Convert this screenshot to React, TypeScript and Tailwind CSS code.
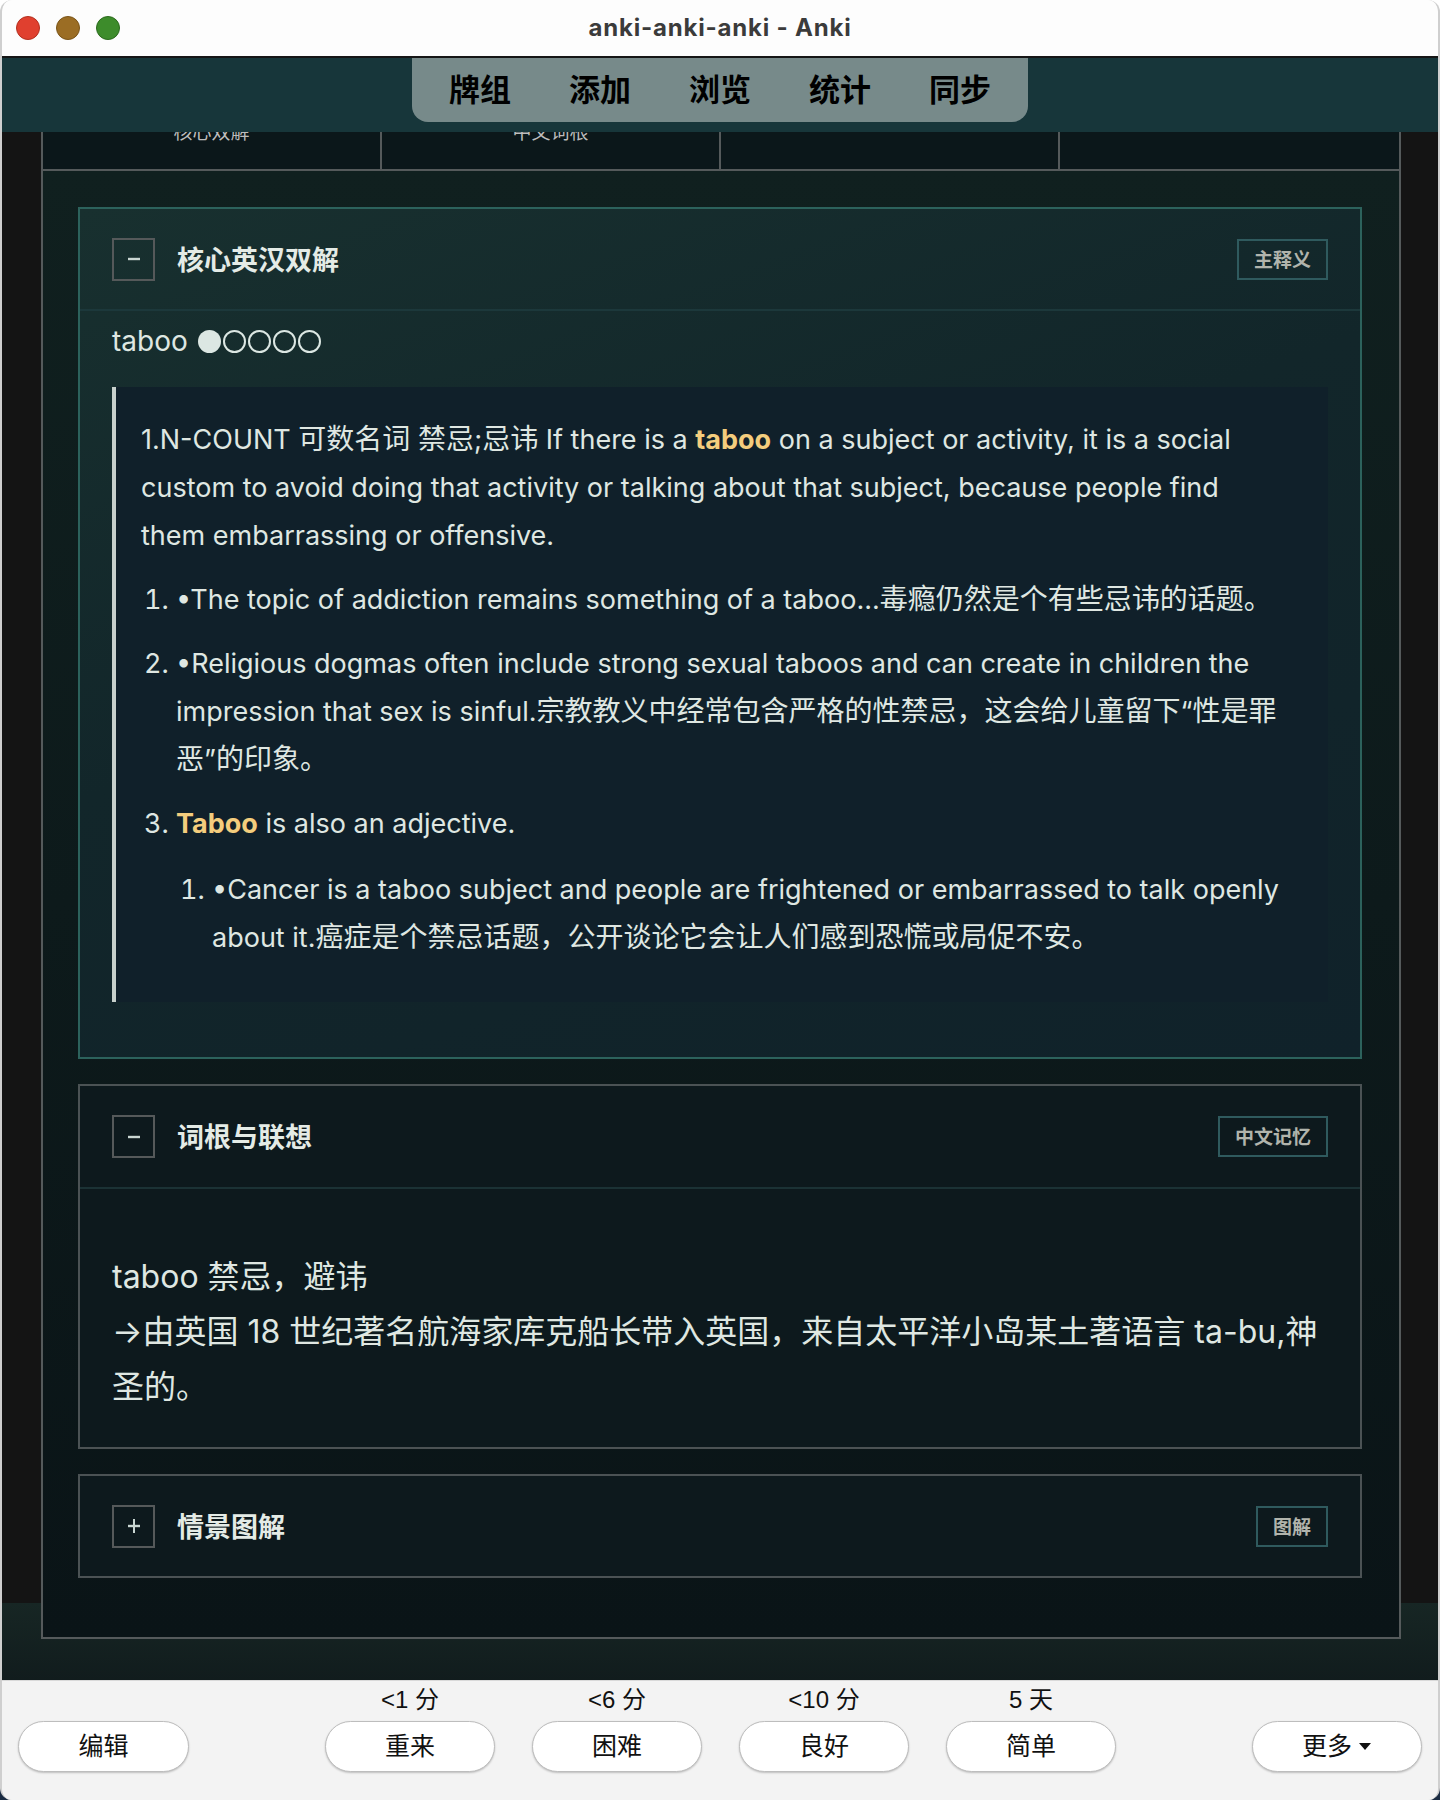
import React from "react";

type Tone = "teal" | "plain";

interface SectionProps {
  title: string;
  badge: string;
  open: boolean;
  tone: Tone;
  children?: React.ReactNode;
}

// Chinese runs are set a touch larger than the latin text around them
function Mixed({ text }: { text: string }) {
  const parts = text.split(/([\u3000-\u303f\u3400-\u9fff\uff00-\uffef]+)/);
  return (
    <>
      {parts.map((p, i) =>
        i % 2 ? (
          <span key={i} className="text-[28px] leading-none">
            {p}
          </span>
        ) : (
          p
        )
      )}
    </>
  );
}

function ToggleBox({ open }: { open: boolean }) {
  return (
    <div className="w-[43px] h-[43px] border-2 border-[#55595a] flex items-center justify-center shrink-0">
      <svg width="18" height="18" viewBox="0 0 18 18">
        <line x1="3" y1="9" x2="15" y2="9" stroke="#c9d6d2" strokeWidth="2.4" />
        {!open && <line x1="9" y1="2" x2="9" y2="16" stroke="#c9d6d2" strokeWidth="2" />}
      </svg>
    </div>
  );
}

function Section({ title, badge, open, tone, children }: SectionProps) {
  const teal = tone === "teal";
  return (
    <section
      className={
        teal
          ? "border-2 border-[#2c625c] bg-[linear-gradient(160deg,#18302f,#12262a_45%,#10222a)]"
          : "border-2 border-[#4b5254] bg-[#0d191d]"
      }
    >
      <div
        className={
          open
            ? teal
              ? "h-[102px] flex items-center justify-between px-[32px] border-b-2 border-[#1c383b]"
              : "h-[103px] flex items-center justify-between px-[32px] border-b-2 border-[#1b3235]"
            : "h-[100px] flex items-center justify-between px-[32px]"
        }
      >
        <div className="flex items-center">
          <ToggleBox open={open} />
          <h2 className="ml-[22px] text-[27px] font-bold text-[#e4ebe6] font-['Noto_Sans_CJK_SC',sans-serif]">
            {title}
          </h2>
        </div>
        <span className="h-[41px] px-[15px] border-2 border-[#2f5a5e] flex items-center text-[19px] font-bold text-[#b1b4ac] font-['Noto_Sans_CJK_SC',sans-serif]">
          {badge}
        </span>
      </div>
      {open && children}
    </section>
  );
}

function Hl({ children }: { children: React.ReactNode }) {
  return <b className="font-bold text-[#f4cd7d]">{children}</b>;
}

function Definition() {
  return (
    <div className="px-[32px] pt-[14px] pb-[55px] text-[#dfe7e2]">
      <div className="flex items-center h-[32px]">
        <span className="text-[28px] leading-[32px]">taboo</span>
        <div className="ml-[10px] flex gap-[2px]">
          <span className="w-[23px] h-[23px] rounded-full bg-[#dce7e3]" />
          <span className="w-[23px] h-[23px] rounded-full border-2 border-[#dce7e3]" />
          <span className="w-[23px] h-[23px] rounded-full border-2 border-[#dce7e3]" />
          <span className="w-[23px] h-[23px] rounded-full border-2 border-[#dce7e3]" />
          <span className="w-[23px] h-[23px] rounded-full border-2 border-[#dce7e3]" />
        </div>
      </div>
      <blockquote className="mt-[30px] border-l-4 border-[#c7d0cc] bg-[#10202a] pl-[25px] pr-[44px] pt-[29px] pb-[40px] text-[27px] leading-[48px]">
        <p>
          <Mixed text="1.N-COUNT 可数名词 禁忌;忌讳 If there is a " />
          <Hl>taboo</Hl> on a subject or activity, it is a social custom to avoid doing that activity or talking
          about that subject, because people find them embarrassing or offensive.
        </p>
        <ol className="list-decimal pl-[35px] mt-[16px] space-y-[16px]">
          <li>
            <Mixed text="•The topic of addiction remains something of a taboo...毒瘾仍然是个有些忌讳的话题。" />
          </li>
          <li>
            <Mixed text="•Religious dogmas often include strong sexual taboos and can create in children the impression that sex is sinful.宗教教义中经常包含严格的性禁忌，这会给儿童留下“性是罪恶”的印象。" />
          </li>
          <li>
            <Hl>Taboo</Hl> is also an adjective.
            <ol className="list-decimal pl-[36px] mt-[18px]">
              <li>
                <Mixed text="•Cancer is a taboo subject and people are frightened or embarrassed to talk openly about it.癌症是个禁忌话题，公开谈论它会让人们感到恐慌或局促不安。" />
              </li>
            </ol>
          </li>
        </ol>
      </blockquote>
    </div>
  );
}

function Etymology() {
  return (
    <div className="px-[32px] pt-[60px] pb-[33px] text-[32px] leading-[55px] text-[#dfe7e2]">
      <p>taboo 禁忌，避讳</p>
      <p>→由英国 18 世纪著名航海家库克船长带入英国，来自太平洋小岛某土著语言 ta-bu,神圣的。</p>
    </div>
  );
}

const tabs = ["核心双解", "中文词根", "", ""];
const navItems = ["牌组", "添加", "浏览", "统计", "同步"];
const answers = [
  { label: "<1 分", text: "重来" },
  { label: "<6 分", text: "困难" },
  { label: "<10 分", text: "良好" },
  { label: "5 天", text: "简单" },
];

function PillButton({ children, wide }: { children: React.ReactNode; wide?: boolean }) {
  return (
    <button
      className={
        (wide ? "w-[171px] " : "w-[170px] ") +
        "h-[51px] rounded-full bg-white border border-[#bdbdbd] shadow-[0_1px_2px_rgba(0,0,0,0.22)] flex items-center justify-center text-[25px] text-[#111]"
      }
    >
      {children}
    </button>
  );
}

export default function App() {
  return (
    <div className="w-[1440px] h-[1800px] bg-[linear-gradient(to_bottom,#ffffff_50%,#1b2c43_50%)] font-['Inter','Noto_Sans_CJK_SC',sans-serif]">
      <div className="w-full h-full rounded-[12px] overflow-hidden flex flex-col border-x-2 border-[#cfcfcf] bg-[#f3f3f3]">
        {/* title bar */}
        <div className="h-[58px] shrink-0 bg-[#fdfdfd] border-b-2 border-[#161616] grid grid-cols-[1fr_auto_1fr] items-center">
          <div className="flex gap-[16px] pl-[14px]">
            <span className="w-[24px] h-[24px] rounded-full bg-[#e0402f] border border-[#b3301f]" />
            <span className="w-[24px] h-[24px] rounded-full bg-[#9b6d24] border border-[#7a5418]" />
            <span className="w-[24px] h-[24px] rounded-full bg-[#3d8c2b] border border-[#2b6a1d]" />
          </div>
          <div className="text-[24px] font-bold tracking-[0.8px] text-[#3b3b3b]">anki-anki-anki - Anki</div>
          <div />
        </div>

        {/* top nav */}
        <div className="h-[74px] shrink-0 bg-[#17363a] flex justify-center">
          <nav className="w-[616px] h-[64px] pb-[5px] rounded-b-[16px] bg-[#778a8a] flex items-center justify-center gap-[58px]">
            {navItems.map((n) => (
              <span key={n} className="text-[31px] leading-none font-bold text-black font-['Noto_Sans_CJK_SC',sans-serif]">
                {n}
              </span>
            ))}
          </nav>
        </div>

        {/* card view, scrolled down a little */}
        <main className="h-[1548px] shrink-0 overflow-hidden bg-[linear-gradient(to_bottom,#141414_1471px,#172624_1471px,#111c1d_1548px)]">
          <div className="ml-[39px] w-[1360px] -mt-[41px] border-2 border-[#555a5b]">
            <div className="grid grid-cols-4 h-[78px] bg-[#0b171a] border-b-2 border-[#555a5b]">
              {tabs.map((t, i) => (
                <div
                  key={i}
                  className={
                    (i < 3 ? "border-r-2 border-[#555a5b] " : "") +
                    "flex items-center justify-center text-[19px] text-[#bdbdbd] font-['Noto_Sans_CJK_SC',sans-serif]"
                  }
                >
                  {t}
                </div>
              ))}
            </div>
            <div className="bg-[linear-gradient(to_bottom,#10201f,#0a1417)] pt-[36px] pb-[59px] pl-[35px] pr-[37px] flex flex-col gap-[25px]">
              <Section title="核心英汉双解" badge="主释义" open tone="teal">
                <Definition />
              </Section>
              <Section title="词根与联想" badge="中文记忆" open tone="plain">
                <Etymology />
              </Section>
              <Section title="情景图解" badge="图解" open={false} tone="plain" />
            </div>
          </div>
        </main>

        {/* answer buttons */}
        <div className="flex-1 bg-[#f3f3f3] border-t border-[#d9d9d9] px-[16px] pb-[28px] flex items-end justify-between font-['Liberation_Sans','Noto_Sans_CJK_SC',sans-serif]">
          <PillButton wide>编辑</PillButton>
          <div className="flex gap-[37px]">
            {answers.map((a) => (
              <div key={a.text} className="flex flex-col items-center">
                <span className="text-[24px] leading-[28px] text-[#111] mb-[7px]">{a.label}</span>
                <PillButton>{a.text}</PillButton>
              </div>
            ))}
          </div>
          <PillButton>
            更多
            <svg className="ml-[6px]" width="14" height="9" viewBox="0 0 14 9">
              <path d="M1 1h12L7 8z" fill="#111" />
            </svg>
          </PillButton>
        </div>
      </div>
    </div>
  );
}
